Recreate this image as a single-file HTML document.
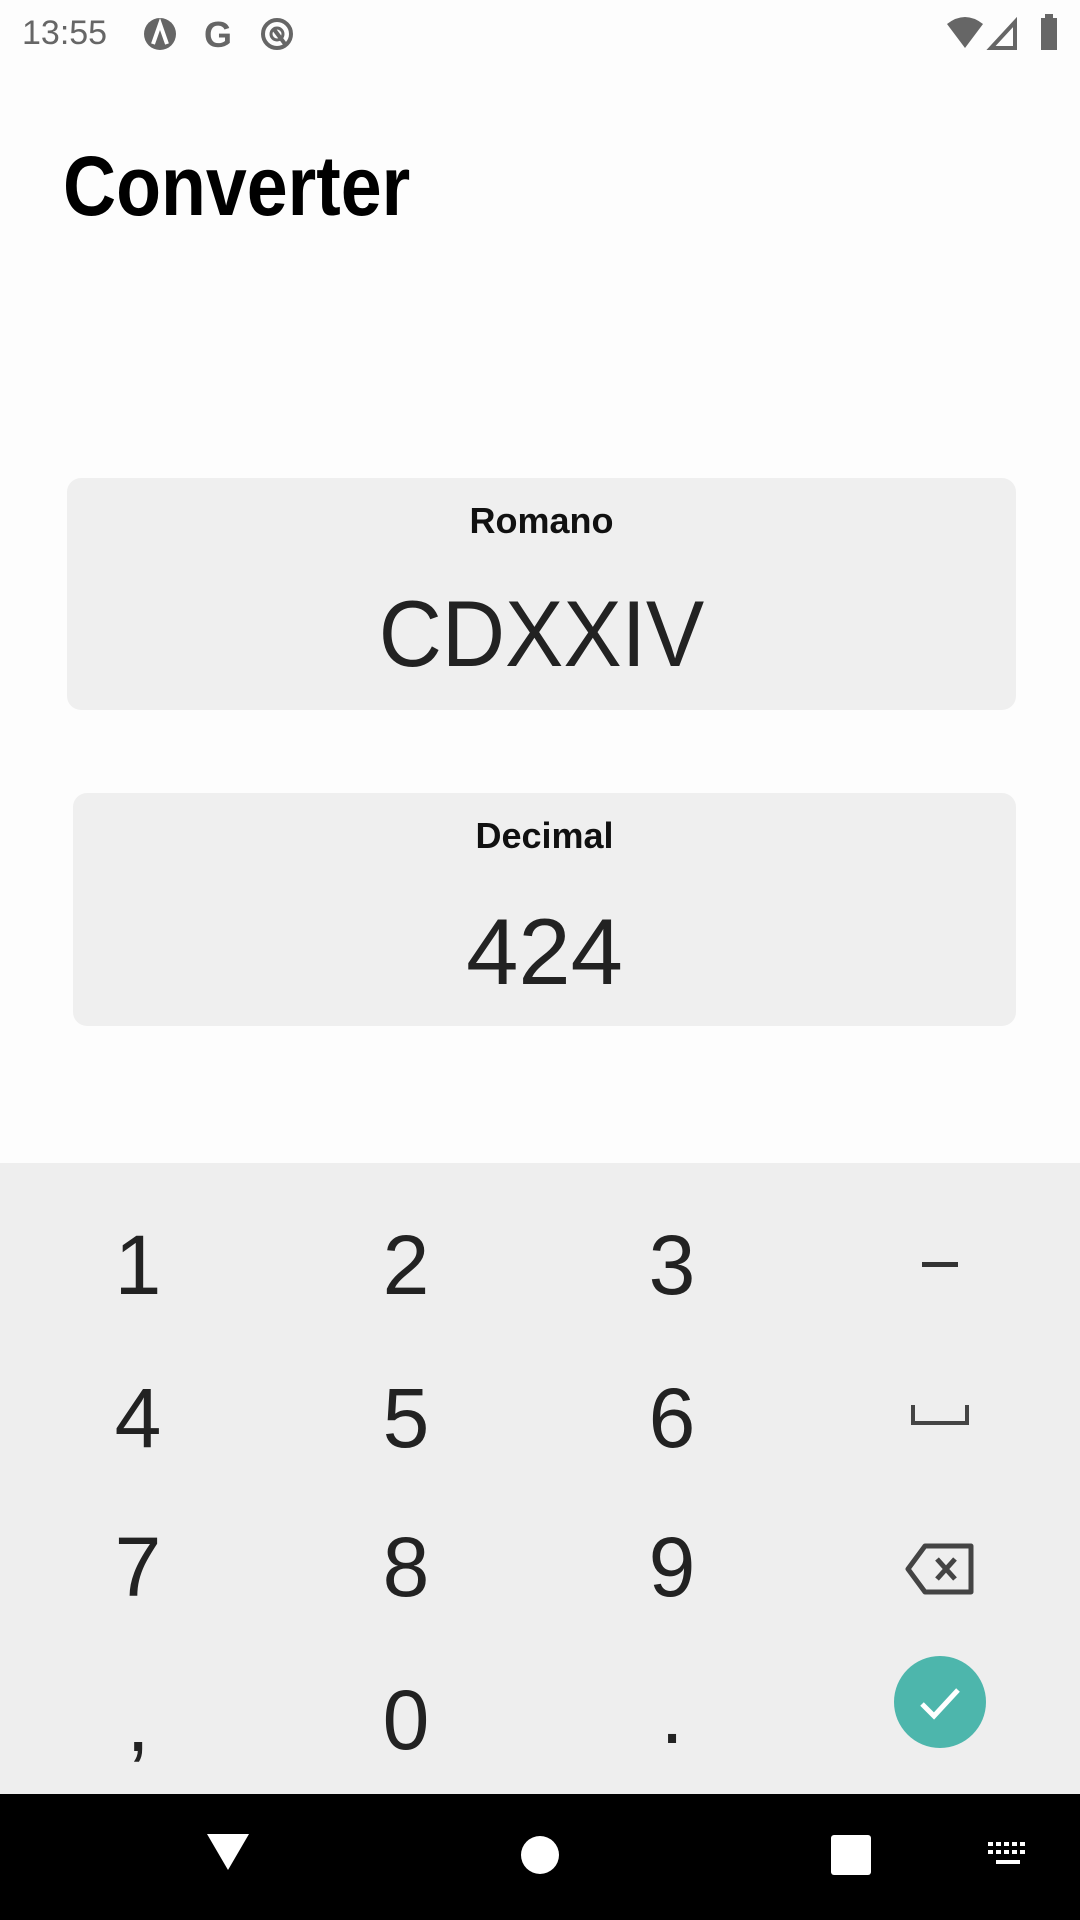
<!DOCTYPE html>
<html><head><meta charset="utf-8"><style>
*{margin:0;padding:0;box-sizing:border-box}
body{width:1080px;height:1920px;background:#fdfdfd;font-family:"Liberation Sans",sans-serif;position:relative;overflow:hidden;color:#202020}
.a{position:absolute}
.card{position:absolute;background:#efefef;border-radius:14px}
.lbl{position:absolute;width:100%;text-align:center;font-weight:bold;font-size:36px;color:#111}
.val{position:absolute;width:100%;text-align:center;font-size:94px;color:#222}
.kb{position:absolute;left:0;top:1163px;width:1080px;height:631px;background:#eeeeee}
.k{position:absolute;width:200px;text-align:center;font-size:84px;line-height:100px;color:#222;margin-left:-100px;margin-top:-50px}
.nav{position:absolute;left:0;top:1794px;width:1080px;height:126px;background:#000}
</style></head><body>
<div class="a" style="left:22px;top:14px;font-size:34px;color:#666">13:55</div>
<svg class="a" style="left:140px;top:14px" width="170" height="40" viewBox="0 0 170 40">
<circle cx="20" cy="20" r="16" fill="#666"/><path d="M13 30 L20 10 L27 30" stroke="#fff" stroke-width="4" fill="none"/>
<text x="78" y="33" font-family="Liberation Sans" font-weight="bold" font-size="36" fill="#666" text-anchor="middle">G</text>
<circle cx="137" cy="20" r="14" stroke="#666" stroke-width="4" fill="none"/><circle cx="137" cy="20" r="6" stroke="#666" stroke-width="3" fill="none"/><path d="M133 14 L145 30" stroke="#666" stroke-width="4"/>
</svg>
<svg class="a" style="left:945px;top:12px" width="120" height="40" viewBox="0 0 120 40">
<path d="M2 12 Q20 -2 38 12 L20 36 Z" fill="#666"/>
<path d="M46 36 L70 10 L70 36 Z" fill="none" stroke="#666" stroke-width="4"/>
<rect x="96" y="6" width="16" height="32" fill="#666"/><rect x="100" y="2" width="8" height="5" fill="#666"/>
</svg>
<div class="a" style="left:63px;top:138px;font-size:84px;font-weight:bold;color:#000;transform:scaleX(0.875);transform-origin:0 0">Converter</div>
<div class="card" style="left:67px;top:478px;width:949px;height:232px">
<div class="lbl" style="top:22px">Romano</div>
<div class="val" style="top:102px;transform:scaleX(0.93)">CDXXIV</div></div>
<div class="card" style="left:73px;top:793px;width:943px;height:233px">
<div class="lbl" style="top:22px">Decimal</div>
<div class="val" style="top:105px">424</div></div>
<div class="kb"></div>
<div class="k" style="left:138px;top:1265px">1</div>
<div class="k" style="left:406px;top:1265px">2</div>
<div class="k" style="left:672px;top:1265px">3</div>
<div class="a" style="left:922px;top:1262px;width:36px;height:5px;background:#333"></div>
<div class="k" style="left:138px;top:1418px">4</div>
<div class="k" style="left:406px;top:1418px">5</div>
<div class="k" style="left:672px;top:1418px">6</div>
<svg class="a" style="left:910px;top:1403px" width="60" height="24"><path d="M3 2 V20 H57 V2" stroke="#444" stroke-width="4" fill="none"/></svg>
<div class="k" style="left:138px;top:1567px">7</div>
<div class="k" style="left:406px;top:1567px">8</div>
<div class="k" style="left:672px;top:1567px">9</div>
<svg class="a" style="left:905px;top:1543px" width="70" height="52" viewBox="0 0 70 52"><path d="M20 3 H66 V49 H20 L3 26 Z" stroke="#444" stroke-width="5" fill="none" stroke-linejoin="round"/><path d="M32 16 L50 36 M50 16 L32 36" stroke="#444" stroke-width="5"/></svg>
<div class="k" style="left:138px;top:1722px">,</div>
<div class="k" style="left:406px;top:1720px">0</div>
<div class="k" style="left:672px;top:1714px">.</div>
<svg class="a" style="left:894px;top:1656px" width="92" height="92"><circle cx="46" cy="46" r="46" fill="#4db6ac"/><path d="M28 48 L40 60 L64 34" stroke="#fff" stroke-width="5" fill="none"/></svg>
<div class="nav"></div>
<svg class="a" style="left:0;top:1794px" width="1080" height="126">
<path d="M207 40 H249 L228 76 Z" fill="#fff"/>
<circle cx="540" cy="61" r="19" fill="#fff"/>
<rect x="831" y="41" width="40" height="40" rx="3" fill="#fff"/>
<g fill="#fff"><rect x="988" y="48" width="5" height="4"/><rect x="996" y="48" width="5" height="4"/><rect x="1004" y="48" width="5" height="4"/><rect x="1012" y="48" width="5" height="4"/><rect x="1020" y="48" width="5" height="4"/><rect x="988" y="56" width="5" height="4"/><rect x="996" y="56" width="5" height="4"/><rect x="1004" y="56" width="5" height="4"/><rect x="1012" y="56" width="5" height="4"/><rect x="1020" y="56" width="5" height="4"/><rect x="996" y="66" width="24" height="4"/></g>
</svg>
</body></html>
